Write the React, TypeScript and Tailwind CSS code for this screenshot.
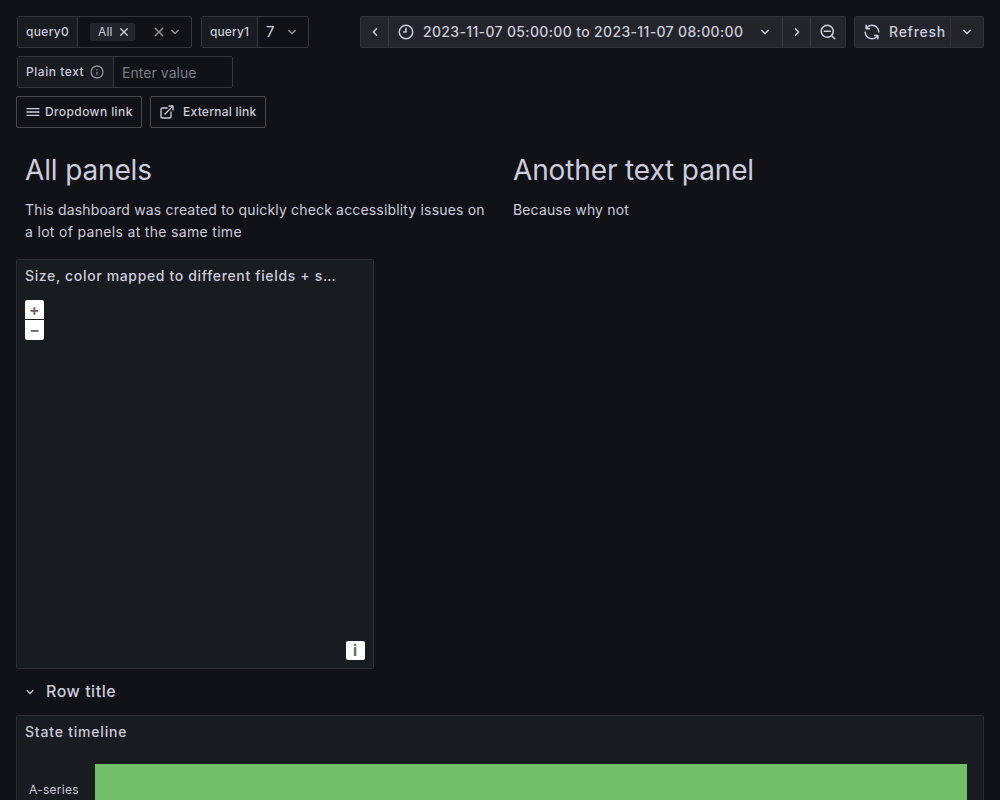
import type { ReactNode } from 'react';

const PATHS = {
  down: 'M17,9.17a1,1,0,0,0-1.41,0L12,12.71,8.46,9.17a1,1,0,0,0-1.41,0,1,1,0,0,0,0,1.42l4.24,4.24a1,1,0,0,0,1.42,0L17,10.59A1,1,0,0,0,17,9.17Z',
  left: 'M11.29,12l3.54-3.54a1,1,0,0,0,0-1.41,1,1,0,0,0-1.42,0L9.17,11.29a1,1,0,0,0,0,1.42L13.41,17a1,1,0,0,0,.71.29,1,1,0,0,0,.71-.29,1,1,0,0,0,0-1.41Z',
  right: 'M14.83,11.29,10.59,7.05a1,1,0,0,0-1.42,0,1,1,0,0,0,0,1.41L12.71,12,9.17,15.54a1,1,0,0,0,0,1.41,1,1,0,0,0,.71.29,1,1,0,0,0,.71-.29l4.24-4.24A1,1,0,0,0,14.83,11.29Z',
  external:
    'M18,10.82a1,1,0,0,0-1,1V19a1,1,0,0,1-1,1H5a1,1,0,0,1-1-1V8A1,1,0,0,1,5,7h7.18a1,1,0,0,0,0-2H5A3,3,0,0,0,2,8V19a3,3,0,0,0,3,3H16a3,3,0,0,0,3-3V11.82A1,1,0,0,0,18,10.82Zm3.92-8.2a1,1,0,0,0-.54-.54A1,1,0,0,0,21,2H15a1,1,0,0,0,0,2h3.59L8.29,14.29a1,1,0,0,0,0,1.42,1,1,0,0,0,1.42,0L20,5.41V9a1,1,0,0,0,2,0V3A1,1,0,0,0,21.92,2.62Z',
  sync: 'M19.91,15.51H15.38a1,1,0,0,0,0,2h2.4A8,8,0,0,1,4,12a1,1,0,0,0-2,0,10,10,0,0,0,16.88,7.23V21a1,1,0,0,0,2,0V16.5A1,1,0,0,0,19.91,15.51ZM12,2A10,10,0,0,0,5.12,4.77V3a1,1,0,0,0-2,0V7.5a1,1,0,0,0,1,1h4.5a1,1,0,0,0,0-2H6.22A8,8,0,0,1,20,12a1,1,0,0,0,2,0A10,10,0,0,0,12,2Z',
  zoomOut:
    'M21.71,20.29,18,16.61A9,9,0,1,0,16.61,18l3.68,3.68a1,1,0,0,0,1.42,0A1,1,0,0,0,21.71,20.29ZM11,18a7,7,0,1,1,7-7A7,7,0,0,1,11,18Zm4-8H7a1,1,0,0,0,0,2h8a1,1,0,0,0,0-2Z',
  bars: 'M3,8H21a1,1,0,0,0,0-2H3A1,1,0,0,0,3,8Zm18,8H3a1,1,0,0,0,0,2H21a1,1,0,0,0,0-2Zm0-5H3a1,1,0,0,0,0,2H21a1,1,0,0,0,0-2Z',
  info: 'M12,2A10,10,0,1,0,22,12,10,10,0,0,0,12,2Zm0,18a8,8,0,1,1,8-8A8,8,0,0,1,12,20Zm0-8.5a1,1,0,0,0-1,1v3a1,1,0,0,0,2,0v-3A1,1,0,0,0,12,11.5Zm0-4a1.25,1.25,0,1,0,1.25,1.25A1.25,1.25,0,0,0,12,7.5Z',
  times:
    'M13.41,12l4.3-4.29a1,1,0,1,0-1.42-1.42L12,10.59,7.71,6.29A1,1,0,0,0,6.29,7.71L10.59,12l-4.3,4.29a1,1,0,0,0,0,1.42,1,1,0,0,0,1.42,0L12,13.41l4.29,4.3a1,1,0,0,0,1.42,0,1,1,0,0,0,0-1.42Z',
  clock:
    'M12,2A10,10,0,1,0,22,12,10,10,0,0,0,12,2Zm0,18a8,8,0,1,1,8-8A8,8,0,0,1,12,20ZM12,6a1,1,0,0,0-1,1v4H9a1,1,0,0,0,0,2h3a1,1,0,0,0,1-1V7A1,1,0,0,0,12,6Z',
};

function Icon({ name, size = 16, className = '' }: { name: keyof typeof PATHS; size?: number; className?: string }) {
  return (
    <svg viewBox="0 0 24 24" width={size} height={size} fill="currentColor" className={`shrink-0 ${className}`}>
      <path d={PATHS[name]} />
    </svg>
  );
}

function Label({ className, children }: { className: string; children: ReactNode }) {
  return (
    <div
      className={`flex h-full shrink-0 items-center border-r border-[#36373d] bg-[#181b1f] pl-2 text-xs font-medium ${className}`}
    >
      {children}
    </div>
  );
}

const field = 'flex h-8 shrink-0 items-center overflow-hidden rounded-xs border border-[#36373d]';
const toolbar = 'flex h-8 shrink-0 overflow-hidden rounded-xs border border-[#303137] bg-[#24252b] text-sm font-medium';
const link = 'flex h-8 shrink-0 items-center rounded-xs border border-[#47484f] pl-2 text-xs font-medium';

export default function App() {
  return (
    <div className="h-[800px] w-[1000px] overflow-hidden bg-[#111217] px-4 pt-4 font-['Inter',sans-serif] text-sm tracking-[0.15px] text-[#ccccdc]">
      <header className="flex h-8 justify-between">
        <div className="flex gap-[9px] pl-px">
          <div className={`${field} w-[175px]`}>
            <Label className="w-[60px] tracking-[0.32px]">query0</Label>
            <div className="ml-3 flex h-[18px] w-[45px] items-center rounded-xs bg-[#22252b] pl-2 text-xs">
              <span className="w-[18px]">All</span>
              <Icon name="times" />
            </div>
            <Icon name="times" size={18} className="ml-[15px] text-[#8e8e9a]" />
            <Icon name="down" size={18} className="-ml-0.5 text-[#8e8e9a]" />
          </div>
          <div className={`${field} w-[108px]`}>
            <Label className="w-14 tracking-[0.1px]">query1</Label>
            <span className="w-[25px] pl-2 text-[15px]">7</span>
            <Icon name="down" size={18} className="text-[#8e8e9a]" />
          </div>
        </div>
        <div className="flex gap-2">
          <div className={`${toolbar} w-[486px]`}>
            <button className="flex w-7 items-center justify-center border-r border-[#3a3b42]">
              <Icon name="left" size={18} />
            </button>
            <button className="flex w-[394px] items-center border-r border-[#3a3b42] pl-2">
              <Icon name="clock" size={18} />
              <span className="ml-2 w-[333px] text-left tracking-[0.35px] whitespace-nowrap">
                2023-11-07 05:00:00 to 2023-11-07 08:00:00
              </span>
              <Icon name="down" size={18} />
            </button>
            <button className="flex w-7 items-center justify-center border-r border-[#3a3b42]">
              <Icon name="right" size={18} />
            </button>
            <button className="flex flex-1 items-center justify-center">
              <Icon name="zoomOut" size={18} />
            </button>
          </div>
          <div className={`${toolbar} w-[130px]`}>
            <button className="flex w-24 items-center border-r border-[#303137] pl-2">
              <Icon name="sync" size={18} />
              <span className="ml-2 tracking-[0.75px]">Refresh</span>
            </button>
            <button className="flex flex-1 items-center justify-center">
              <Icon name="down" size={18} />
            </button>
          </div>
        </div>
      </header>

      <div className="mt-2 flex pl-px">
        <div className={`${field} w-[216px]`}>
          <Label className="w-24">
            <span className="w-[63px] tracking-[0.55px] whitespace-nowrap">Plain text</span>
            <Icon name="info" className="text-[#8e8e9a]" />
          </Label>
          <span className="pt-0.5 pl-2 tracking-[0.05px] text-[#7c7c87]">Enter value</span>
        </div>
      </div>

      <nav className="mt-2 flex gap-2">
        <a className={`${link} w-[126px]`}>
          <Icon name="bars" />
          <span className="ml-1 tracking-[0.4px] whitespace-nowrap">Dropdown link</span>
        </a>
        <a className={`${link} w-[116px]`}>
          <Icon name="external" />
          <span className="ml-2 tracking-[0.25px] whitespace-nowrap">External link</span>
        </a>
      </nav>

      <main>
        <section className="grid h-[131px] grid-cols-[480px_480px] gap-2 pt-[26px]">
          <div className="px-[9px]">
            <h1 className="text-[28px] leading-8 tracking-[-0.15px]">All panels</h1>
            <p className="mt-[13px] leading-[22px] tracking-[0.17px]">
              This dashboard was created to quickly check accessiblity issues on{' '}
              <span className="tracking-[0.32px]">a lot of panels at the same time</span>
            </p>
          </div>
          <div className="px-[9px]">
            <h1 className="text-[28px] leading-8 tracking-[-0.13px]">Another text panel</h1>
            <p className="mt-[13px] leading-[22px]">Because why not</p>
          </div>
        </section>

        <section className="flex h-[410px] w-[358px] flex-col rounded-xs border border-[#2d2e34] bg-[#181b1f]">
          <h2 className="w-[322px] truncate pl-2 leading-8 font-medium tracking-[0.65px]">
            Size, color mapped to different fields + size
          </h2>
          <div className="flex flex-1 flex-col justify-between p-2">
            <div className="flex w-[19px] flex-col gap-px text-[15px] leading-none font-bold text-[#666]">
              <button className="flex h-[19px] items-center justify-center rounded-t-xs bg-white">+</button>
              <button className="flex h-5 items-center justify-center rounded-b-xs bg-white pb-0.5">–</button>
            </div>
            <button className="flex h-[19px] w-[19px] items-center justify-center self-end rounded-xs bg-white pr-px text-[15px] leading-none font-bold text-[#666]">
              i
            </button>
          </div>
        </section>

        <div className="flex h-[46px] items-center pl-1.5">
          <Icon name="down" />
          <h3 className="mb-0.5 ml-2 text-base font-medium tracking-[0.52px]">Row title</h3>
        </div>

        <section className="h-[200px] w-[968px] rounded-xs border border-[#2d2e34] bg-[#181b1f]">
          <h2 className="pl-2 leading-8 font-medium tracking-[0.8px]">State timeline</h2>
          <div className="mt-4 flex">
            <span className="w-[78px] pt-[18px] pl-3 text-xs leading-4 tracking-[0.28px]">A-series</span>
            <div className="h-24 w-[872px] bg-[#73bf69]" />
          </div>
        </section>
      </main>
    </div>
  );
}
